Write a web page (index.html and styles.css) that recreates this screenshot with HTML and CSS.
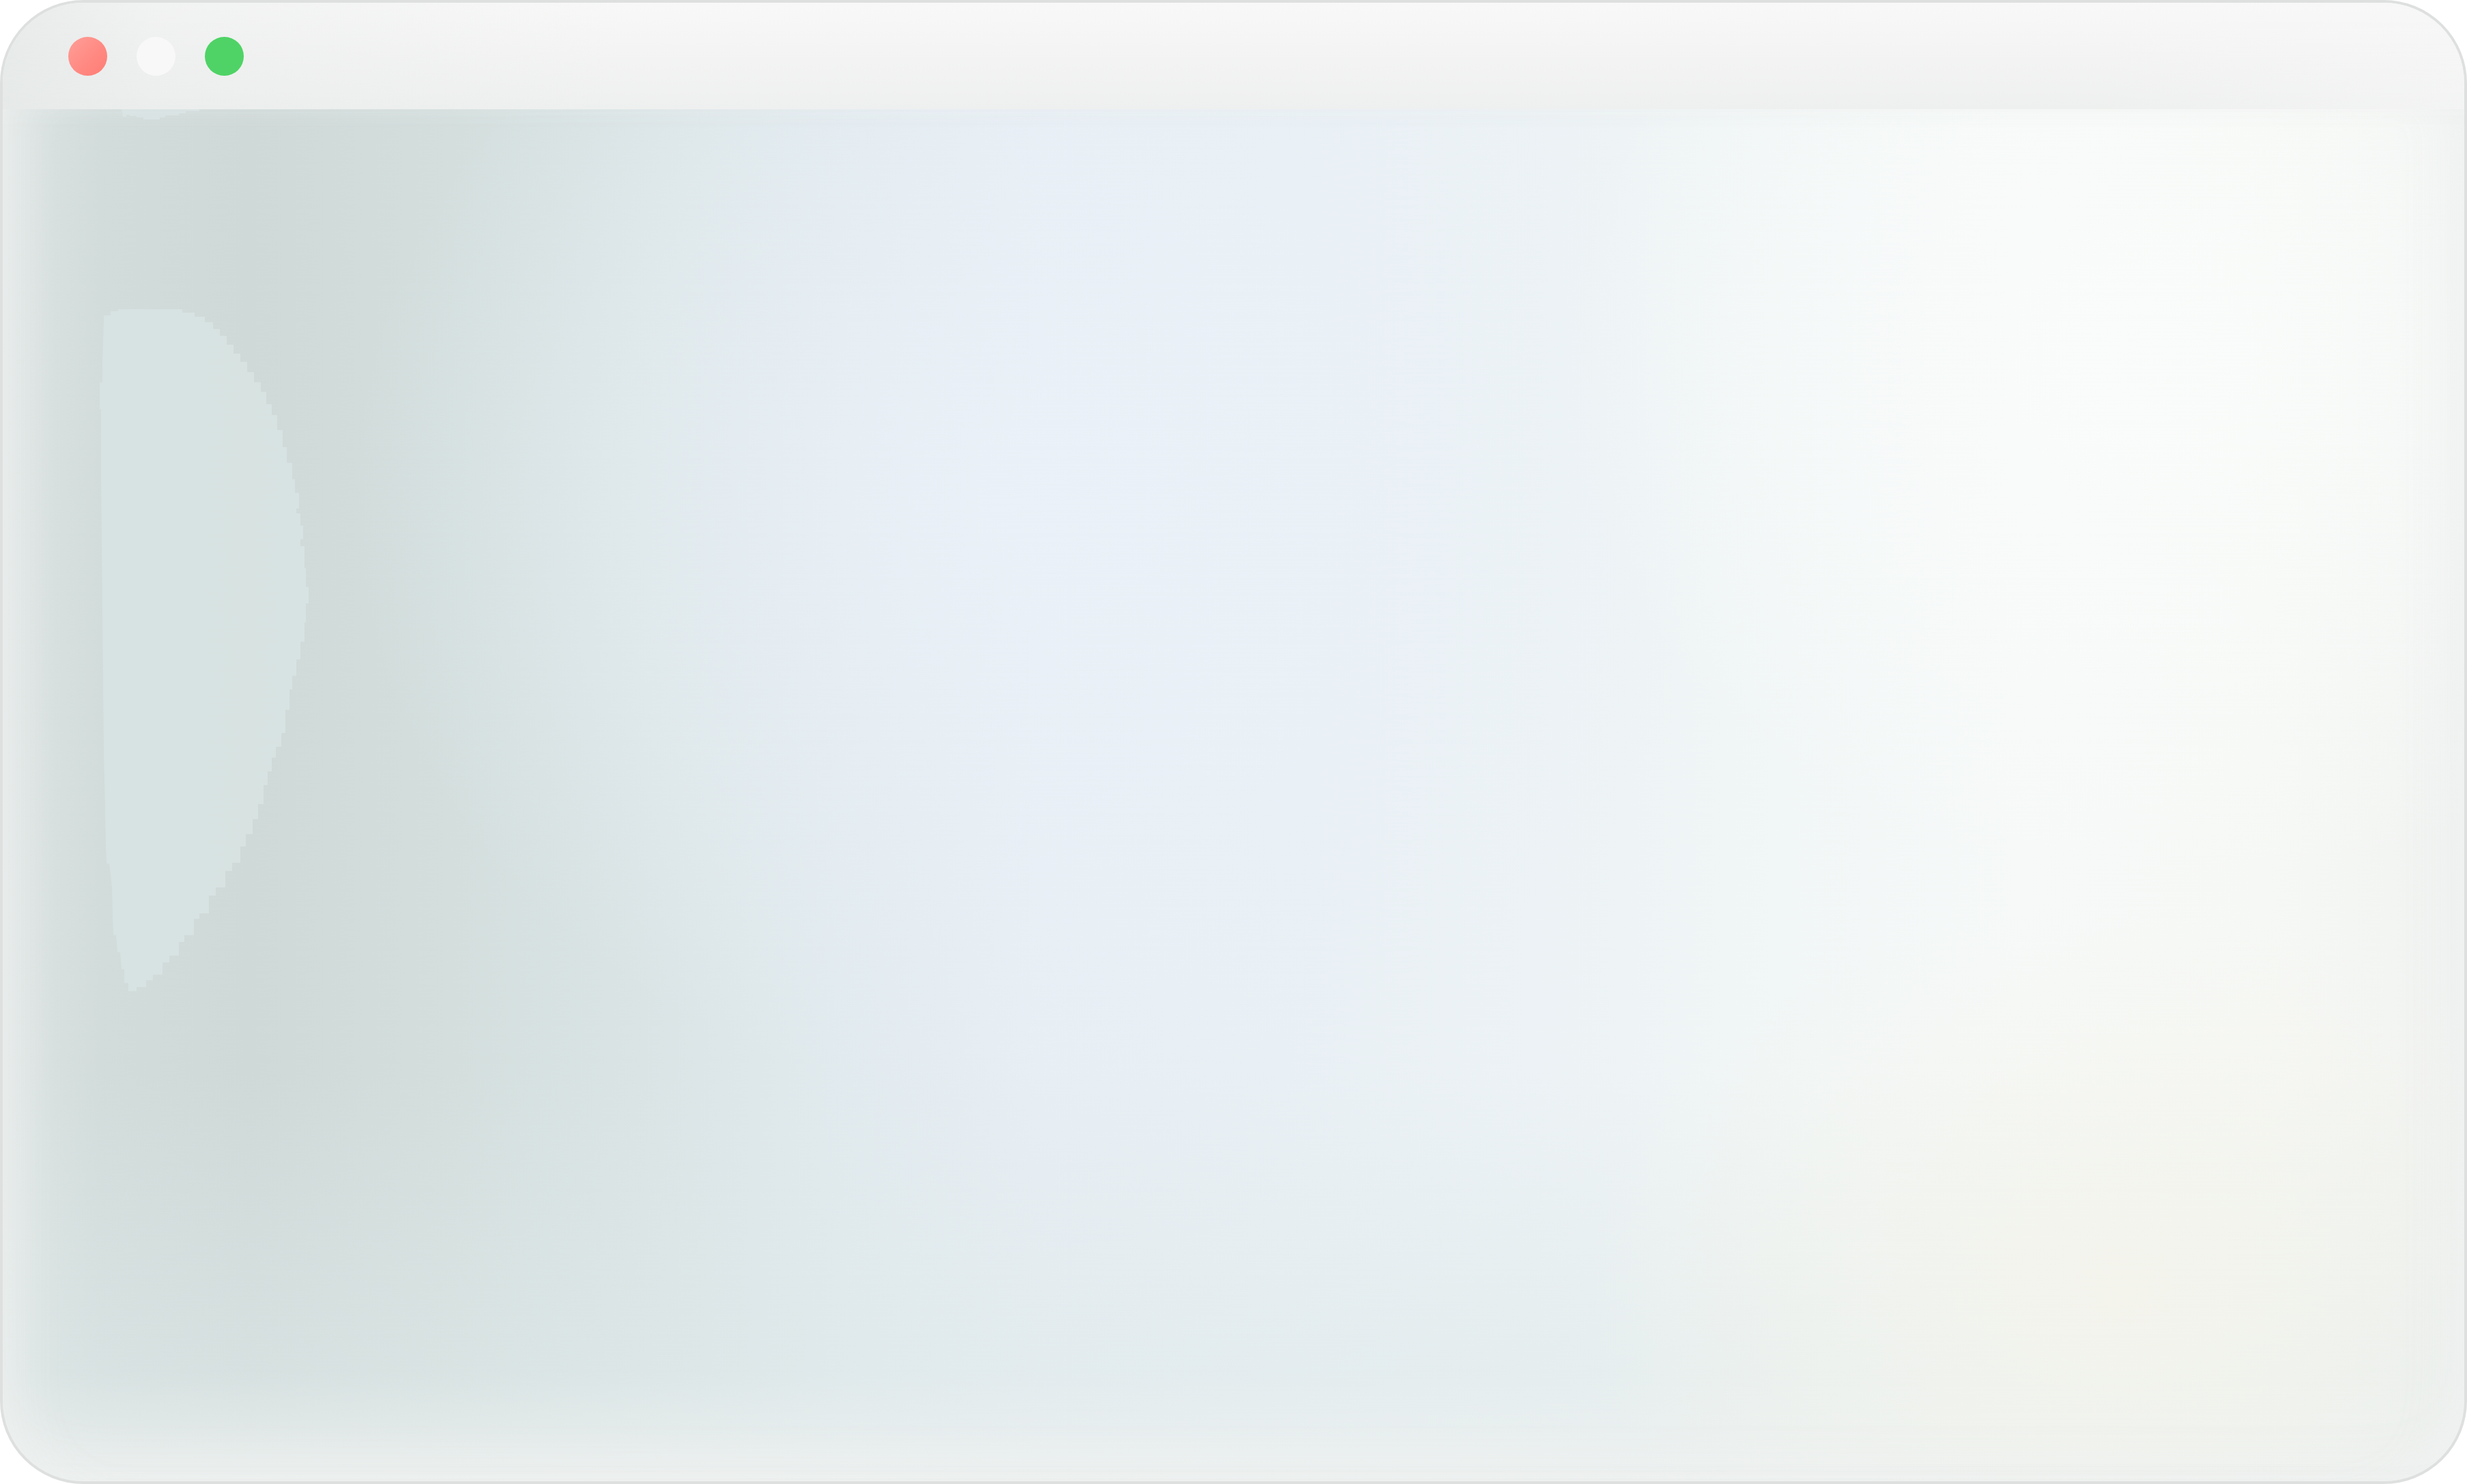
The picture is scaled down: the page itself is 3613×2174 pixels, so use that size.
FILE: index.html
```html
<!DOCTYPE html>
<html lang="en">
<head>
<meta charset="utf-8">
<title>Window</title>
<link rel="stylesheet" href="styles.css">
</head>
<body>
<div class="window">
  <header class="titlebar">
    <span class="light light-close"></span>
    <span class="light light-min"></span>
    <span class="light light-max"></span>
  </header>
  <main class="content">
    <svg class="backdrop" viewBox="4 160 3605 2010" preserveAspectRatio="none" aria-hidden="true">
      <polygon class="blob" points="152,470 152,462 162,462 162,456 173,456 173,453 267,453 267,458 285,458 285,464 300,464 300,472 312,472 312,482 322,482 322,492 332,492 332,505 342,505 342,518 352,518 352,530 362,530 362,545 372,545 372,560 382,560 382,574 390,574 390,592 398,592 398,608 406,608 406,630 414,630 414,655 420,655 420,678 428,678 428,702 432,702 432,722 438,722 438,745 434,745 434,752 440,752 440,770 444,770 444,790 440,790 440,800 446,800 446,832 448,832 448,860 452,860 452,884 448,884 448,912 446,912 446,940 440,940 440,966 434,966 434,990 428,990 428,1010 424,1010 424,1040 418,1040 418,1074 412,1074 412,1094 404,1094 404,1110 398,1110 398,1130 392,1130 392,1150 386,1150 386,1178 378,1178 378,1200 370,1200 370,1222 360,1222 360,1240 352,1240 352,1264 340,1264 340,1276 330,1276 330,1300 316,1300 316,1312 306,1312 306,1338 292,1338 292,1346 284,1346 284,1370 270,1370 270,1380 262,1380 262,1400 248,1400 248,1410 238,1410 238,1428 224,1428 224,1436 214,1436 214,1446 200,1446 200,1452 188,1452 188,1440 182,1440 182,1420 178,1420 176,1395 172,1395 170,1370 166,1370 165,1340 164,1300 160,1265 156,1265 155,1240 152,1100 150,900 148,700 148,600 146,600 146,560 150,560 150,530"/>
      <polygon class="blob-top" points="178,160 292,160 292,163 272,163 272,166 262,166 262,169 242,169 242,172 234,172 234,175 210,175 210,172 200,172 200,170 190,170 190,168 185,168 185,171 180,171"/>
    </svg>
  </main>
</div>
</body>
</html>
```

FILE: styles.css
```css
html, body {
  margin: 0;
  padding: 0;
  height: 100%;
  background: #ffffff;
  font-family: "Inter", "Liberation Sans", sans-serif;
}

.window {
  box-sizing: border-box;
  height: 100vh;
  width: 100vw;
  border: 4px solid #dedfdf;
  border-radius: 122px;
  overflow: hidden;
  display: flex;
  flex-direction: column;
  background: #eef1f0;
}

.titlebar {
  flex: 0 0 156px;
  box-sizing: border-box;
  display: flex;
  align-items: center;
  gap: 43px;
  padding-left: 96px;
  background:
    linear-gradient(90deg, rgba(228,232,231,0.8) 0%, rgba(232,235,234,0.4) 6%, rgba(240,242,241,0) 25%, rgba(240,242,241,0) 85%, rgba(246,247,246,0.6) 100%),
    linear-gradient(180deg, #f7f8f7 0%, #f3f4f3 45%, #eef0ef 100%);
}

.light {
  width: 57px;
  height: 57px;
  border-radius: 50%;
  flex: 0 0 57px;
}

.light-close {
  background: linear-gradient(135deg, #ff9f98 0%, #ff8a83 55%, #ff7c74 100%);
}

.light-min {
  background: #f7f8f7;
}

.light-max {
  background: #4fd366;
}

.content {
  flex: 1 1 auto;
  position: relative;
  border-radius: 0 0 118px 118px;
  background:
    radial-gradient(ellipse 22% 28% at 86% 86%, rgba(244,244,236,0.95) 0%, rgba(244,244,236,0) 100%),
    radial-gradient(ellipse 25% 40% at 88% 18%, rgba(250,252,251,0.95) 0%, rgba(250,252,251,0) 100%),
    radial-gradient(ellipse 28% 45% at 42% 28%, rgba(234,241,248,0.9) 0%, rgba(234,241,248,0) 100%),
    linear-gradient(180deg, rgba(220,230,232,0) 70%, rgba(222,232,232,0.5) 92%, rgba(236,240,239,0.9) 100%),
    linear-gradient(90deg, #dde4e3 0%, #d2dcdb 4%, #cfd9d8 10%, #d3dedd 18%, #dae4e5 26%, #e1eaee 34%, #e7eef4 42%, #e9f0f5 52%, #ecf2f5 62%, #f1f6f6 72%, #f6f9f8 82%, #f6f8f5 92%, #f3f5f3 97%, #eff1f0 100%);
  box-shadow:
    inset 60px 0 70px -40px rgba(236,239,238,0.95),
    inset -60px 0 70px -40px rgba(240,242,241,0.9),
    inset 0 -60px 70px -40px rgba(238,241,240,0.95);
}

.backdrop {
  position: absolute;
  inset: 0;
  width: 100%;
  height: 100%;
}

.blob {
  fill: #d8e4e4;
  opacity: 0.8;
}

.blob-top {
  fill: #dbe5e5;
  opacity: 0.8;
}
```
